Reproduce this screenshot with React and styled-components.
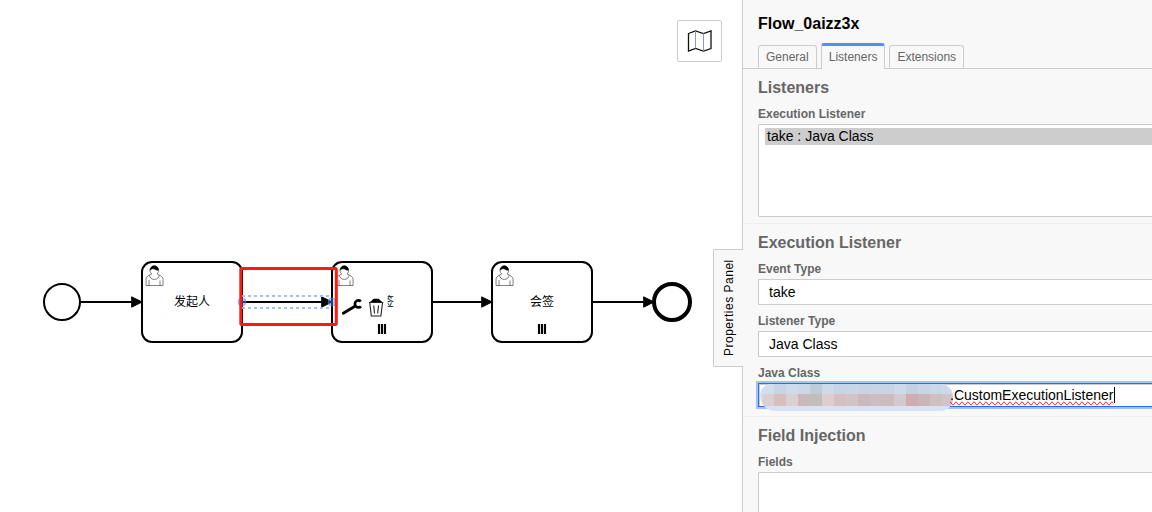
import React from "react";
import styled, { createGlobalStyle, css } from "styled-components";

const GlobalStyle = createGlobalStyle`
  * {
    box-sizing: border-box;
  }

  body {
    margin: 0;
    overflow: hidden;
    background: #ffffff;
    font-family: "Liberation Sans", Arial, "Noto Sans CJK SC", sans-serif;
  }
`;

const tabs = ["General", "Listeners", "Extensions"];

// palette of the masked package name, 12px cells
const maskTop = ["#d2deef", "#c9d5e5", "#d0daea", "#cbd8e8", "#bfccd8", "#cfd9e8", "#c8d5e6", "#cad6e6", "#c8d3e4", "#c9d4e4", "#c9d5e5", "#ced9ea", "#c6d0e0", "#c9d4e5", "#cad7ea", "#cbd9ee"];
const maskBottom = ["#dccfd1", "#d8bfbf", "#dccfd4", "#ccb8ba", "#c5bdba", "#dfcccd", "#d5c0c0", "#d2c4c6", "#ccb9c0", "#cdbdc2", "#ccbcbe", "#d6c8cb", "#cdadb1", "#ccb5b8", "#d0bfbf", "#d3c5c3"];

function Flow({ from, to }) {
  return (
    <g>
      <path d={`M${from} 302H${to}`} stroke="#000" strokeWidth="2" />
      <path
        d={`M${to - 10} 297L${to} 302L${to - 10} 307z`}
        fill="#000"
        stroke="#000"
        strokeLinecap="round"
      />
    </g>
  );
}

function Task({ x, label, multi }) {
  return (
    <g transform={`translate(${x} 262)`}>
      <rect width="100" height="80" rx="10" fill="#fff" stroke="#000" strokeWidth="2" />
      <g fill="#fff" stroke="#000" strokeWidth="0.5">
        <path d="m15 12c.909-.845 1.594-2.049 1.594-3.385 0-2.554-1.805-4.622-4.357-4.622-2.552 0-4.288 2.068-4.288 4.622 0 1.348.974 2.562 1.896 3.405-.529.187-5.669 2.097-5.794 4.756v6.718h17v-6.718c0-2.298-5.528-4.595-6.051-4.776zm-8 6l0 5.5m11 0l0-5" />
        <path d="m15 12m2.162 1.009c0 2.447-2.158 4.431-4.821 4.431-2.663 0-4.822-1.981-4.822-4.431" />
        <path
          fill="#000"
          d="m15 12m-6.9-3.8c0 0 2.251-2.358 4.274-1.177 2.024 1.181 4.221 1.537 4.124.965-.098-.57-.117-3.791-4.191-4.136-3.572-.31-4.208 4.349-4.207 4.349z"
        />
      </g>
      <TaskLabel x="50" y="44">
        {label}
      </TaskLabel>
      {multi && <path d="M47 62v10M50 62v10M53 62v10" stroke="#000" strokeWidth="2.15" />}
    </g>
  );
}

function ContextPad() {
  return (
    <g>
      <path d="M340 292H387.700V319H340z" fill="#fff" />
      <path d="M343.300 313.300L354.500 306.500" stroke="#000" strokeWidth="2.8" strokeLinecap="round" />
      <path d="M360.800 301.400A3.500 3.500 0 1 0 361 306.300" stroke="#000" strokeWidth="2.700" />
      <path d="M370 302L373.800 298.800H378.500L382.300 302z" fill="#000" />
      <path d="M369 302.500H383.300" stroke="#222" strokeWidth="1" />
      <path
        d="M369.800 303L371.300 316H380.900L382.500 303M373.800 305.500L374.500 313.500M378.500 305.500L377.700 313.500"
        stroke="#222"
        strokeWidth="1.1"
      />
    </g>
  );
}

function Diagram() {
  return (
    <DiagramSvg width="742" height="512" viewBox="0 0 742 512" fill="none">
      <circle cx="62" cy="302" r="18" stroke="#000" strokeWidth="2" />
      <circle cx="672" cy="302" r="18" stroke="#000" strokeWidth="4" />
      <Task x={142} label="发起人" />
      <Task x={332} label="会签" multi />
      <Task x={492} label="会签" multi />
      <Flow from={80} to={142} />
      <Flow from={242} to={332} />
      <Flow from={432} to={492} />
      <Flow from={592} to={654} />
      <path
        d="M242 296H332M242 308H332"
        stroke="#a0c0fa"
        strokeWidth="2"
        strokeDasharray="3 3"
      />
      <g fill="#4d90ff" fillOpacity="0.45" stroke="#4d90ff" strokeOpacity="0.5">
        <circle cx="242" cy="302" r="4" />
        <circle cx="332" cy="302" r="4" />
      </g>
      <ContextPad />
      <rect x="240.800" y="268.500" width="95.500" height="56" rx="1" stroke="#ff1a0e" strokeWidth="3" />
    </DiagramSvg>
  );
}

function App() {
  return (
    <>
      <GlobalStyle />
      <Modeler>
        <Canvas>
          <Diagram />
          <MapButton>
            <svg width="26" height="24" viewBox="0 0 26 24" fill="none" stroke="#111">
              <path d="M1.500 4.500L8.500 2L16.500 4.500L24 2V19.500L16.500 22L8.500 19.500L1.500 22z" strokeWidth="1.300" />
              <path d="M8.500 2V19.500M16.500 4.500V22" stroke="#8f98b0" strokeWidth="1" />
            </svg>
          </MapButton>
        </Canvas>
        <Panel>
          <PanelToggle>Properties Panel</PanelToggle>
          <Title>Flow_0aizz3x</Title>
          <Tabs>
            {tabs.map((tab) => (
              <Tab key={tab} $active={tab === "Listeners"}>
                {tab}
              </Tab>
            ))}
          </Tabs>
          <Group $height={155}>
            <Heading>Listeners</Heading>
            <Label>Execution Listener</Label>
            <ListBox>
              <Option>take : Java Class</Option>
            </ListBox>
          </Group>
          <Group $height={193}>
            <Heading>Execution Listener</Heading>
            <Label>Event Type</Label>
            <Field>take</Field>
            <Label>Listener Type</Label>
            <Field>Java Class</Field>
            <Label>Java Class</Label>
            <Field $focused>
              <Mask>
                {[...maskTop, ...maskBottom].map((color, i) => (
                  <MaskCell key={i} $color={color} />
                ))}
              </Mask>
              <Typed>.CustomExecutionListener</Typed>
              <Caret />
            </Field>
          </Group>
          <Group $height={120}>
            <Heading>Field Injection</Heading>
            <Label>Fields</Label>
            <ListBox />
          </Group>
        </Panel>
      </Modeler>
    </>
  );
}

export default App;

const Modeler = styled.div`
  display: flex;
  width: 1152px;
  height: 512px;
  overflow: hidden;
`;

const Canvas = styled.main`
  position: relative;
  flex: 0 0 742px;
`;

const DiagramSvg = styled.svg`
  display: block;
`;

const TaskLabel = styled.text`
  font-family: "Noto Sans CJK SC", sans-serif;
  font-size: 12px;
  text-anchor: middle;
  fill: #000000;
`;

const MapButton = styled.button`
  position: absolute;
  top: 20px;
  right: 20px;
  display: flex;
  align-items: center;
  justify-content: center;
  width: 45px;
  height: 42px;
  padding: 0;
  border: 1px solid #cccccc;
  border-radius: 2px;
  background: #ffffff;
`;

const Panel = styled.aside`
  position: relative;
  flex: 1;
  border-left: 1px solid #cccccc;
  background: #f8f8f8;
`;

const PanelToggle = styled.div`
  position: absolute;
  top: 249px;
  left: -30px;
  display: flex;
  align-items: center;
  justify-content: center;
  width: 30px;
  height: 118px;
  border: 1px solid #cccccc;
  border-left: 0;
  border-radius: 0 2px 2px 0;
  background: #f8f8f8;
  font-size: 12px;
  letter-spacing: 0.5px;
  writing-mode: vertical-rl;
  transform: rotate(180deg);
`;

const Title = styled.h1`
  margin: 0;
  padding: 15px 15px 0;
  height: 43px;
  font-size: 16px;
  line-height: 18px;
`;

const Tabs = styled.nav`
  display: flex;
  align-items: flex-end;
  gap: 4px;
  height: 26px;
  padding-left: 15px;
  border-bottom: 1px solid #cccccc;
`;

const Tab = styled.div`
  height: 23px;
  padding: 0 7px;
  border: 1px solid #cccccc;
  border-bottom: 0;
  border-radius: 3px 3px 0 0;
  color: #666666;
  font-size: 12px;
  line-height: 22px;

  ${({ $active }) =>
    $active &&
    css`
      height: 26px;
      margin-bottom: -1px;
      border-top: 3px solid #4d90ff;
      background: #f8f8f8;
    `}
`;

const Group = styled.section`
  height: ${({ $height }) => $height}px;
  padding: 10px 0 0 15px;
  border-bottom: 1px solid #eeeeee;
`;

const Heading = styled.h2`
  margin: 0 0 7px;
  color: #666666;
  font-size: 16px;
  line-height: 18px;
`;

const Label = styled.div`
  height: 20px;
  color: #666666;
  font-size: 12px;
  font-weight: bold;
  line-height: 20px;
`;

const ListBox = styled.div`
  height: 93px;
  padding: 3px 0 0 6px;
  border: 1px solid #cccccc;
  border-right: 0;
  border-radius: 2px 0 0 2px;
  background: #ffffff;
`;

const Option = styled.div`
  height: 17px;
  padding-left: 2px;
  background: #cdcdcd;
  font-size: 14px;
  line-height: 16px;
`;

const Field = styled.div`
  display: flex;
  height: 26px;
  margin-bottom: 6px;
  padding-left: 10px;
  border: 1px solid #cccccc;
  border-right: 0;
  background: #ffffff;
  font-size: 14px;
  line-height: 25px;

  ${({ $focused }) =>
    $focused &&
    css`
      height: 24px;
      padding-left: 1px;
      border-color: #1a73ff;
      box-shadow: 0 0 0 2px #a3c3fa, inset 1px 1px 0 #cccccc;
      line-height: 23px;
    `}
`;

const Mask = styled.div`
  display: grid;
  flex: none;
  grid-template-columns: repeat(16, 12px);
  grid-template-rows: 10px 12px;
  width: 193px;
  height: 27px;
  padding-left: 2px;
  border-radius: 12px 13px 13px 16px;
  background: #d5e2f8;
  overflow: hidden;
`;

const MaskCell = styled.span`
  background: ${({ $color }) => $color};
`;

const Typed = styled.span`
  margin-left: -3px;
  text-decoration-line: spelling-error;
`;

const Caret = styled.i`
  width: 1px;
  height: 16px;
  margin: 3px 0 0 1px;
  background: #000000;
`;
